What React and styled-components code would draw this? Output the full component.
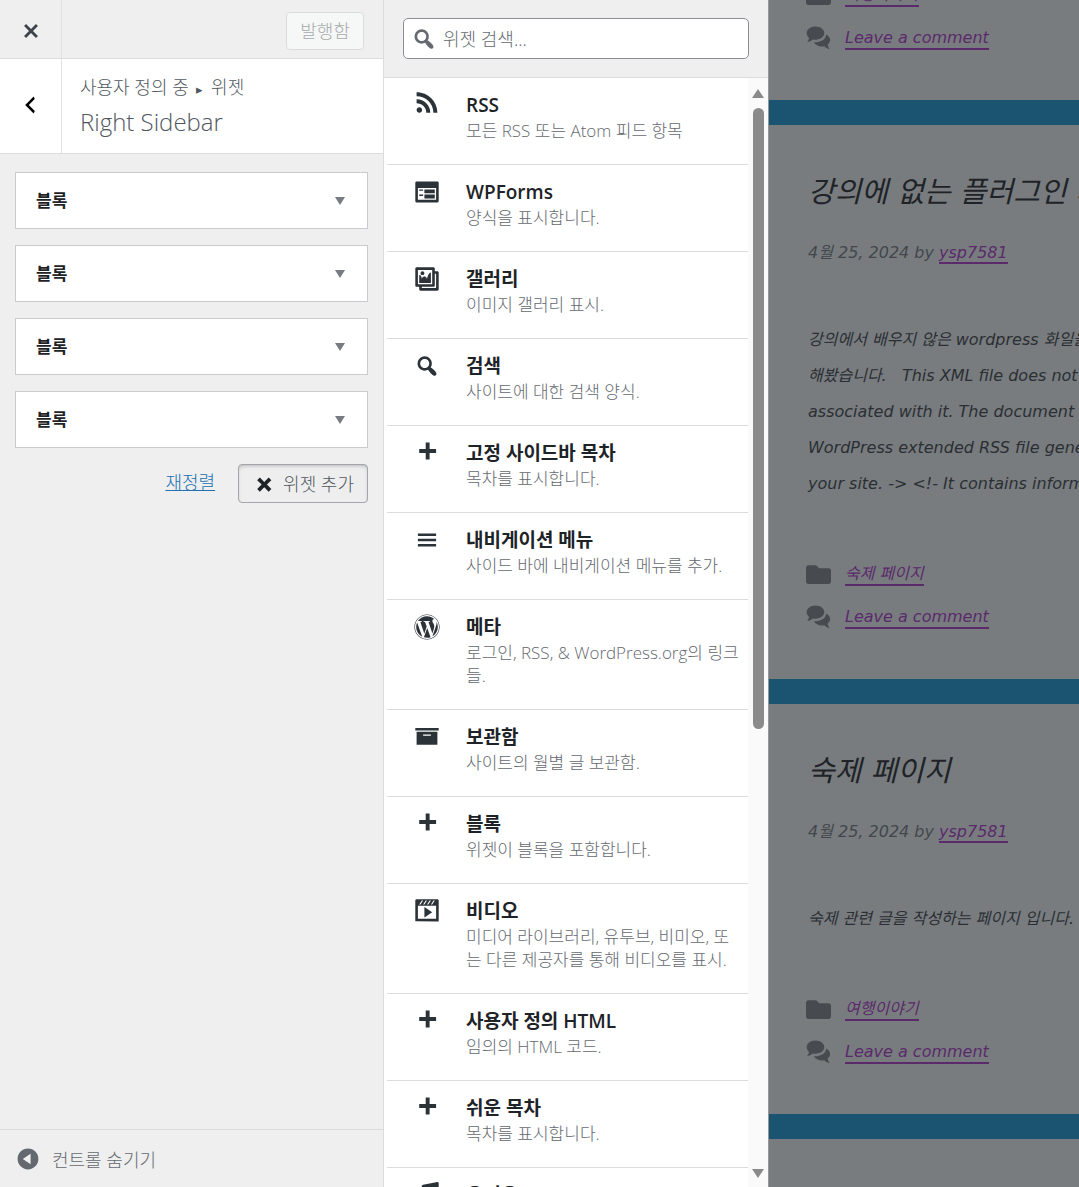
import React, { useState } from "react";
import styled, { createGlobalStyle, css } from "styled-components";
import { FaWordpress, FaFolder } from "react-icons/fa";

const icons = {
  rss: "M14.92 18H18C18 9.32 10.82 2.25 2 2.25v3.02c7.12 0 12.92 5.71 12.92 12.73zm-5.44 0h3.08C12.56 12.27 7.82 7.6 2 7.6v3.02c2 0 3.87.77 5.29 2.16C8.7 14.17 9.48 16.03 9.48 18zm-5.35-.02c1.17 0 2.13-.93 2.13-2.09 0-1.15-.96-2.09-2.13-2.09-1.18 0-2.13.94-2.13 2.09 0 1.16.95 2.09 2.13 2.09z",
  form: "M2 2h16c.55 0 1 .45 1 1v14c0 .55-.45 1-1 1H2c-.55 0-1-.45-1-1V3c0-.55.45-1 1-1zm15 14V7H3v9h14zM4 8v1h3V8H4zm4 0v3h8V8H8zm-4 4v1h3v-1H4zm4 0v3h8v-3H8z",
  gallery:
    "M16 4h1.96c.57 0 1.04.47 1.04 1.04v12.92c0 .57-.47 1.04-1.04 1.04H5.04C4.47 19 4 18.53 4 17.96V16H2.04C1.47 16 1 15.53 1 14.96V2.04C1 1.47 1.47 1 2.04 1h12.92c.57 0 1.04.47 1.04 1.04V4zM3 14h11V3H3v11zm5-8.5C8 4.67 7.33 4 6.5 4S5 4.67 5 5.5 5.67 7 6.5 7 8 6.33 8 5.5zm2 4.5s1-5 3-5v8H4V7c2 0 2 3 2 3s.33-2 2-2 2 2 2 2zm7 7V6h-1v8.96c0 .57-.47 1.04-1.04 1.04H6v1h11z",
  search:
    "M12.14 4.18c1.87 1.87 2.11 4.75.72 6.89.12.1.22.21.36.31.2.16.47.36.81.59.34.24.56.39.66.47.42.31.73.57.94.78.32.32.6.65.84 1 .25.35.44.69.59 1.04.14.35.21.68.18 1-.02.32-.14.59-.36.81s-.49.34-.81.36c-.31.02-.65-.04-.99-.19-.35-.14-.7-.34-1.04-.59-.35-.24-.68-.52-1-.84-.21-.21-.47-.52-.77-.93-.1-.13-.25-.35-.47-.66-.22-.32-.4-.57-.56-.78-.16-.2-.29-.35-.44-.5-2.07 1.09-4.69.76-6.44-.98-2.14-2.15-2.14-5.64 0-7.78 2.15-2.15 5.63-2.15 7.78 0zm-1.41 6.36c1.36-1.37 1.36-3.58 0-4.95-1.37-1.37-3.59-1.37-4.95 0-1.37 1.37-1.37 3.58 0 4.95 1.36 1.37 3.58 1.37 4.95 0z",
  plus: "M17 7v3h-5v5H9v-5H4V7h5V2h3v5h5z",
  menu: "M17 7V5H3v2h14zm0 4V9H3v2h14zm0 4v-2H3v2h14z",
  archive: "M19 4v2H1V4h18zM2 7h16v10H2V7zm11 3V9H7v1h6z",
  video:
    "M2 1h16c.55 0 1 .45 1 1v16l-18-.02V2c0-.55.45-1 1-1zm4 1L4 5h1l2-3H6zm4 0H9L7 5h1zm3 0h-1l-2 3h1zm3 0h-1l-2 3h1zm1 14V6H3v10h14zM8 7l6 4-6 4V7z",
  audio:
    "M6.99 3.08l11.02-2c.55-.08.99.45.99 1V14.5c0 1.94-1.57 3.5-3.5 3.5S12 16.44 12 14.5c0-1.93 1.57-3.5 3.5-3.5.54 0 1.04.14 1.5.35V5.08l-9 2V16c-.24 1.7-1.74 3-3.5 3C2.57 19 1 17.44 1 15.5 1 13.57 2.57 12 4.5 12c.54 0 1.04.14 1.5.35V4.08c0-.55.44-.91.99-1z",
  close:
    "M14.95 6.46L11.41 10l3.54 3.54-1.41 1.41L10 11.42l-3.53 3.53-1.42-1.42L8.58 10 5.05 6.47l1.42-1.42L10 8.58l3.54-3.53z",
  back: "M14 5l-5 5 5 5-1 2-7-7 7-7z",
  collapse:
    "M10 2c4.42 0 8 3.58 8 8s-3.58 8-8 8-8-3.58-8-8 3.58-8 8-8zm2 12V6l-6 4z",
};

// these glyphs sit higher in their box than the rest
const viewBoxes = { rss: "0 2 20 20", archive: "0 1 20 20", audio: "0 1 20 20" };

const widgets = [
  { icon: "rss", title: "RSS", text: "모든 RSS 또는 Atom 피드 항목" },
  { icon: "form", title: "WPForms", text: "양식을 표시합니다." },
  { icon: "gallery", title: "갤러리", text: "이미지 갤러리 표시." },
  { icon: "search", title: "검색", text: "사이트에 대한 검색 양식." },
  { icon: "plus", title: "고정 사이드바 목차", text: "목차를 표시합니다." },
  { icon: "menu", title: "내비게이션 메뉴", text: "사이드 바에 내비게이션 메뉴를 추가." },
  { icon: "wordpress", title: "메타", text: "로그인, RSS, & WordPress.org의 링크들." },
  { icon: "archive", title: "보관함", text: "사이트의 월별 글 보관함." },
  { icon: "plus", title: "블록", text: "위젯이 블록을 포함합니다." },
  { icon: "video", title: "비디오", text: "미디어 라이브러리, 유투브, 비미오, 또는 다른 제공자를 통해 비디오를 표시." },
  { icon: "plus", title: "사용자 정의 HTML", text: "임의의 HTML 코드." },
  { icon: "plus", title: "쉬운 목차", text: "목차를 표시합니다." },
  { icon: "audio", title: "오디오", text: "오디오 플레이어를 표시합니다." },
];

const posts = [
  {
    title: "강의에 없는 플러그인 사용",
    lines: [
      "강의에서 배우지 않은 wordpress 화일을",
      "해봤습니다.\u00a0\u00a0 This XML file does not",
      "associated with it. The document",
      "WordPress extended RSS file generated",
      "your site. -> <!- It contains information",
    ],
    category: "숙제 페이지",
  },
  {
    title: "숙제 페이지",
    lines: ["숙제 관련 글을 작성하는 페이지 입니다."],
    category: "여행이야기",
  },
];

function Icon({ name, size = 26 }) {
  if (name === "wordpress") return <FaWordpress size={size} />;
  return (
    <svg
      width={size}
      height={size}
      viewBox={viewBoxes[name] || "0 0 20 20"}
      fill="currentColor"
      aria-hidden="true"
    >
      <path fillRule="evenodd" d={icons[name]} />
    </svg>
  );
}

function CommentsIcon() {
  return (
    <svg width="25" height="25" viewBox="0 0 25 25" fill="currentColor" aria-hidden="true">
      <path d="M9.500 .5c4.900 0 8.800 2.900 8.800 6.600s-3.900 6.600-8.800 6.600c-1 0-1.900-.1-2.800-.3-1.500 1.500-3.400 2.300-5.500 2.500 1.100-1.200 1.700-2.500 1.900-3.900C1.600 10.800.7 9.100.7 7.100.7 3.400 4.600.5 9.500.5z" />
      <path d="M20 8.800c2.500.9 4.100 2.800 4.100 5.100 0 1.800-.9 3.400-2.400 4.500.2 1.700.9 3.300 2 4.600-2.200-.2-4.100-1.200-5.500-2.700-4.400.8-8.700-.8-10.300-4C14.800 16.500 20 13.500 20 8.800z" />
    </svg>
  );
}

function PostLinks({ category }) {
  return (
    <PostFooter>
      <PostFooterRow>
        <FaFolder size={25} />
        <PostLink href="#category">{category}</PostLink>
      </PostFooterRow>
      <PostFooterRow>
        <CommentsIcon />
        <PostLink href="#comment">Leave a comment</PostLink>
      </PostFooterRow>
    </PostFooter>
  );
}

export default function App() {
  const [query, setQuery] = useState("");
  const shown = widgets.filter((w) => w.title.toLowerCase().includes(query.toLowerCase()));

  return (
    <>
      <GlobalStyle />
      <Customizer>
        <Controls>
          <TopBar>
            <CloseButton type="button" aria-label="닫기">
              <Icon name="close" size={28} />
            </CloseButton>
            <PublishButton type="button" disabled>
              발행함
            </PublishButton>
          </TopBar>
          <SectionHead>
            <BackButton type="button" aria-label="뒤로">
              <Icon name="back" size={24} />
            </BackButton>
            <SectionTitle>
              <Breadcrumb>
                사용자 정의 중 <small>▸</small> 위젯
              </Breadcrumb>
              <h3>Right Sidebar</h3>
            </SectionTitle>
          </SectionHead>
          <Blocks>
            {[1, 2, 3, 4].map((id) => (
              <BlockButton type="button" key={id}>
                블록
                <Caret />
              </BlockButton>
            ))}
            <Actions>
              <ReorderLink href="#reorder">재정렬</ReorderLink>
              <AddButton type="button">
                <Icon name="plus" size={25} />
                위젯 추가
              </AddButton>
            </Actions>
          </Blocks>
          <Collapse type="button">
            <Icon name="collapse" size={26} />
            컨트롤 숨기기
          </Collapse>
        </Controls>

        <Available>
          <SearchBar>
            <SearchField>
              <Icon name="search" size={26} />
              <input
                type="text"
                aria-label="위젯 검색"
                placeholder="위젯 검색..."
                value={query}
                onChange={(e) => setQuery(e.target.value)}
              />
            </SearchField>
          </SearchBar>
          <ListArea>
            <List>
              {shown.map((w) => (
                <Widget key={w.title}>
                  <Icon name={w.icon} />
                  <div>
                    <h4>{w.title}</h4>
                    <p>{w.text}</p>
                  </div>
                </Widget>
              ))}
            </List>
            <Scrollbar aria-hidden="true">
              <ScrollArrow />
              <ScrollThumb />
              <ScrollArrow $down />
            </Scrollbar>
          </ListArea>
        </Available>

        <Preview>
          <ScrolledPost>
            <PostLinks category="여행이야기" />
          </ScrolledPost>
          {posts.map((post) => (
            <Post key={post.title}>
              <h2>{post.title}</h2>
              <PostMeta>
                4월 25, 2024 by <PostLink href="#author">ysp7581</PostLink>
              </PostMeta>
              <PostBody>
                {post.lines.map((line) => (
                  <span key={line}>{line}</span>
                ))}
              </PostBody>
              <PostLinks category={post.category} />
            </Post>
          ))}
        </Preview>
      </Customizer>
    </>
  );
}

const GlobalStyle = createGlobalStyle`
  * {
    box-sizing: border-box;
  }
  body {
    margin: 0;
    background: #eee;
    color: #50575e;
    font-family: "Open Sans", "Noto Sans CJK KR", sans-serif;
    font-size: 18px;
    font-weight: 300;
  }
  button, input {
    font: inherit;
    color: inherit;
  }
  h2, h3, h4, p {
    margin: 0;
  }
  svg {
    flex-shrink: 0;
  }
`;

const Customizer = styled.div`
  display: grid;
  grid-template-columns: 384px 384px minmax(0, 1fr);
  height: 100vh;
  overflow: hidden;
`;

const Controls = styled.aside`
  display: flex;
  flex-direction: column;
  min-height: 0;
  background: #efefef;
  border-right: 1px solid #dcdcde;
`;

const TopBar = styled.header`
  display: flex;
  align-items: center;
  justify-content: space-between;
  height: 59px;
  padding-right: 19px;
  border-bottom: 1px solid #dcdcde;
`;

const iconButton = css`
  display: flex;
  align-items: center;
  justify-content: center;
  align-self: stretch;
  width: 62px;
  border: 0;
  border-right: 1px solid #e2e2e4;
  cursor: pointer;
`;

const CloseButton = styled.button`
  ${iconButton}
  padding: 3px 0 0;
  background: transparent;
  color: #3c434a;
`;

const BackButton = styled.button`
  ${iconButton}
  padding: 0 2px 2px 0;
  background: #fff;
  color: #000;
`;

const PublishButton = styled.button`
  height: 38px;
  margin-top: 4px;
  padding: 0 13px;
  border: 1px solid #dcdcde;
  border-radius: 4px;
  background: #f6f7f7;
  color: #a7aaad;
  line-height: 34px;
`;

const SectionHead = styled.div`
  display: flex;
  height: 95px;
  background: #fff;
  border-bottom: 1px solid #dcdcde;
`;

const SectionTitle = styled.div`
  padding: 14px 18px;

  h3 {
    font-size: 24px;
    font-weight: 300;
    line-height: 36px;
  }
`;

const Breadcrumb = styled.div`
  line-height: 28px;

  small {
    margin: 0 3px;
    font-family: "DejaVu Sans", sans-serif;
    font-size: 13px;
  }
`;

const Blocks = styled.div`
  display: flex;
  flex: 1;
  flex-direction: column;
  gap: 16px;
  padding: 18px 15px;
`;

const BlockButton = styled.button`
  display: flex;
  align-items: center;
  justify-content: space-between;
  height: 57px;
  padding: 0 22px 2px 20px;
  border: 1px solid #c9cbce;
  background: #fff;
  color: #1d2327;
  font-size: 17px;
  font-weight: 700;
  cursor: pointer;
`;

const Caret = styled.span`
  margin-top: 2px;
  border: 5px solid transparent;
  border-top: 8px solid #787c82;
  border-bottom: 0;
`;

const Actions = styled.div`
  display: flex;
  justify-content: flex-end;
  align-items: center;
  gap: 23px;
`;

const ReorderLink = styled.a`
  padding-bottom: 5px;
  color: #2271b1;
`;

const AddButton = styled.button`
  display: flex;
  align-items: center;
  gap: 8px;
  height: 39px;
  padding: 0 13px 0 11px;
  border: 1px solid #a2a5a9;
  border-radius: 4px;
  background: #eee;
  box-shadow: inset 0 2px 5px -3px rgba(0, 0, 0, 0.5);
  line-height: 34px;
  cursor: pointer;

  svg {
    margin-top: 3px;
    color: #1d2327;
    transform: rotate(45deg);
  }
`;

const Collapse = styled.button`
  display: flex;
  align-items: center;
  gap: 11px;
  height: 58px;
  padding: 0 15px;
  border: 0;
  border-top: 1px solid #dcdcde;
  background: transparent;
  color: #646970;
  cursor: pointer;
`;

const Available = styled.section`
  display: flex;
  flex-direction: column;
  min-height: 0;
  background: #fff;
`;

const SearchBar = styled.div`
  padding: 18px 19px;
  background: #efefef;
  border-bottom: 1px solid #dcdcde;
`;

const SearchField = styled.label`
  display: flex;
  align-items: center;
  gap: 6px;
  height: 41px;
  padding: 0 7px;
  border: 1px solid #8c8f94;
  border-radius: 5px;
  background: #fff;
  color: #646970;

  input {
    flex: 1;
    min-width: 0;
    padding: 0;
    border: 0;
    outline: 0;
    background: transparent;
  }
  input::placeholder {
    color: #646970;
    opacity: 1;
  }
`;

const ListArea = styled.div`
  display: flex;
  flex: 1;
  min-height: 0;
`;

const List = styled.ul`
  flex: 1;
  min-width: 0;
  margin: 0;
  padding: 0 0 0 3px;
  overflow: hidden;
  list-style: none;
`;

const Widget = styled.li`
  display: flex;
  gap: 26px;
  padding: 14px 8px 18px 27px;
  border-bottom: 1px solid #dcdcde;
  color: #2c3338;

  div {
    min-width: 0;
  }
  h4 {
    color: #1d2327;
    font-size: 19px;
    font-weight: 600;
    line-height: 27px;
  }
  p {
    padding-bottom: 4px;
    color: #646970;
    font-size: 17px;
    line-height: 23px;
  }
`;

const Scrollbar = styled.div`
  display: flex;
  flex-direction: column;
  align-items: center;
  gap: 10px;
  width: 20px;
  padding: 11px 0 9px;
  background: #fafafa;
`;

const ScrollArrow = styled.span`
  border: 6px solid transparent;
  ${({ $down }) =>
    $down
      ? "margin-top: auto; border-top: 9px solid #8a8a8a; border-bottom: 0;"
      : "border-bottom: 9px solid #8a8a8a; border-top: 0;"}
`;

const ScrollThumb = styled.span`
  width: 11px;
  height: 57%;
  border-radius: 6px;
  background: #8a8a8a;
`;

const Preview = styled.main`
  min-width: 0;
  overflow: hidden;
  border-left: 1px solid #94989b;
  background: #787c7f;
  color: #2b2f33;
  font-family: "DejaVu Sans", "Noto Sans CJK KR", sans-serif;
  font-size: 16px;
  font-style: italic;
  font-weight: 400;
  white-space: nowrap;
`;

const Post = styled.article`
  padding: 42px 0 41px 39px;
  border-bottom: 25px solid #1b5470;

  h2 {
    color: #1f2327;
    font-size: 29px;
    font-weight: 400;
    line-height: 50px;
  }
`;

/* the tail of a post that is already scrolled past */
const ScrolledPost = styled(Post)`
  margin-top: -27px;
  padding-top: 0;
`;

const PostMeta = styled.p`
  margin-top: 18px;
  color: #43474b;
  line-height: 36px;
`;

const PostBody = styled.p`
  margin: 51px 0 50px;
  line-height: 36px;

  span {
    display: block;
  }
`;

const PostFooter = styled.footer`
  margin-left: -2px;
  color: #474b50;
`;

const PostFooterRow = styled.div`
  display: flex;
  align-items: center;
  gap: 14px;
  height: 43px;
  padding-top: 2px;
`;

const PostLink = styled.a`
  border-bottom: 2px solid #5b2a6b;
  color: #5b2a6b;
  line-height: 20px;
  text-decoration: none;
`;
